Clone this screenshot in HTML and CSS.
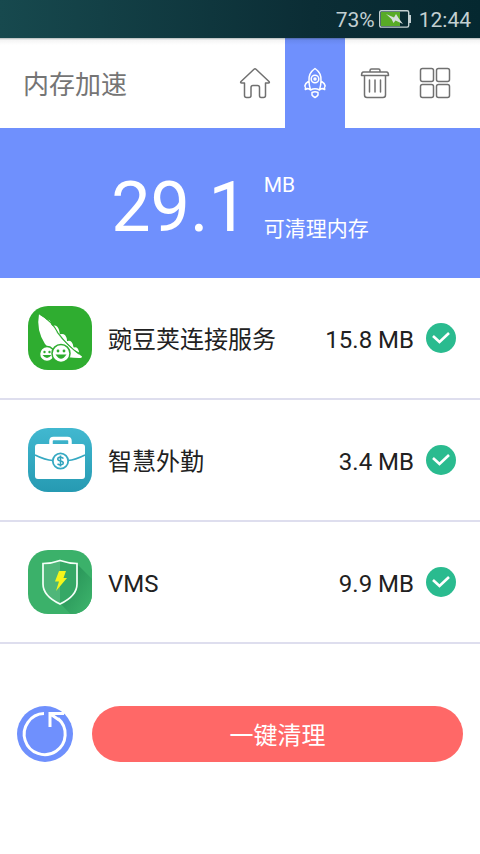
FILE: index.html
```html
<!DOCTYPE html>
<html lang="zh-CN">
<head>
<meta charset="utf-8">
<meta name="viewport" content="width=device-width, initial-scale=1">
<title>内存加速</title>
<link rel="stylesheet" href="styles.css">
</head>
<body>
<div class="status-bar">
  <span>73%</span>
  <svg class="battery" width="32" height="18" viewBox="0 0 32 18" aria-hidden="true">
    <rect x="0.7" y="0.7" width="29" height="16.4" rx="1.5" fill="none" stroke="#c3d0d2" stroke-width="1.4"/>
    <rect x="30" y="5" width="2" height="8" fill="#c3d0d2"/>
    <rect x="2" y="2" width="19" height="14" fill="#58ab27"/>
    <path d="M7 4L15 7.500L17 4L19.500 8L24 14L16.500 10.500L14.500 13L12.500 9Z" fill="#d5dfdc"/>
  </svg>
  <span class="clock">12:44</span>
</div>
<header class="app-bar">
  <h1 class="title">内存加速</h1>
  <nav class="tabs">
    <a class="tab" href="#home" aria-label="主页">
      <svg width="32" height="32" viewBox="0 0 32 32"><path d="M15 2.200Q16 1.300 17 2.200L30 14.500Q31 16 29.300 16H26.500V28.500Q26.500 30.500 24.500 30.500H22Q20.500 30.500 20.500 28.500V20.500Q20.500 18.500 18.500 18.500H14Q12 18.500 12 20.500V28.500Q12 30.500 10 30.500H7.500Q5.500 30.500 5.500 28.500V16H2.700Q1 16 2 14.500Z"/></svg>
    </a>
    <a class="tab tab-active" href="#boost" aria-label="内存加速" aria-current="page">
      <svg width="32" height="32" viewBox="0 0 32 32"><path d="M16 1.500C11.500 4.500 9.500 9 10 14Q6.500 16 5.800 19Q7 20 6.300 22.500Q9.500 20.500 11.500 23Q16 20.500 20.500 23Q22.500 20.500 25.700 22.500Q25 20 26.200 19Q25.500 16 22 14C22.500 9 20.500 4.500 16 1.500ZM10 14Q10 18 11.500 23M22 14Q22 18 20.500 23M13 25.500Q16 24 19 25.500V28Q18 29.500 16 30.500Q14 29.500 13 28Z"/><circle cx="16" cy="12" r="3.800"/><circle cx="16" cy="12" r="1"/></svg>
    </a>
    <a class="tab" href="#clean" aria-label="垃圾清理">
      <svg width="32" height="32" viewBox="0 0 32 32"><path d="M11 5V3.500Q11 2 12.500 2H19.500Q21 2 21 3.500V5M4.500 5H27.500Q29.500 5 29.500 8.500H2.500Q2.500 5 4.500 5ZM5.500 8.500V28Q5.500 30.500 8 30.500H24Q26.500 30.500 26.500 28V8.500M10.500 13V25M16 13V25M21.500 13V25"/></svg>
    </a>
    <a class="tab" href="#apps" aria-label="应用">
      <svg width="32" height="32" viewBox="0 0 32 32"><rect x="1.500" y="1.500" width="13" height="13" rx="2"/><rect x="17.500" y="1.500" width="13" height="13" rx="2"/><rect x="1.500" y="17.500" width="13" height="13" rx="2"/><rect x="17.500" y="17.500" width="13" height="13" rx="2"/></svg>
    </a>
  </nav>
</header>
<main>
  <section class="summary">
    <span class="amount">29.1</span>
    <div class="amount-info"><span>MB</span><span>可清理内存</span></div>
  </section>
  <ul class="app-list">
    <li class="app-row">
      <svg class="app-icon" viewBox="0 0 64 64" aria-hidden="true">
        <rect width="64" height="64" rx="20" fill="#2fad30"/>
        <path d="M18.500 15Q22 13 22.500 19ZM24 21Q30 18 31 28ZM32 29Q38 27 38.500 36ZM39 36Q44 34 45 42ZM45 42.500Q49 40.500 50 45Z" fill="#fff" stroke="#fff" stroke-width="1.500"/>
        <path d="M11 8Q23 15 29 27Q39 40 54 50.500Q54 52 51 52Q29 52 17 38Q8 24 11 8Z" fill="#fff"/>
        <path d="M11.500 8Q24 15 30 27Q39 39 51 48" fill="none" stroke="#2fad30" stroke-width="1.200"/>
        <g fill="#fff" stroke="#2fad30" stroke-width="1.500"><circle cx="19" cy="48" r="7.500"/><circle cx="33" cy="47.500" r="9"/></g>
        <g fill="#2fad30"><circle cx="16.500" cy="46" r="1.200"/><circle cx="21.500" cy="46" r="1.200"/><path d="M14.500 49H23.500Q19 55 14.500 49Z"/><circle cx="30" cy="45" r="1.400"/><circle cx="36" cy="45" r="1.400"/><path d="M27.500 48.500H38.500Q33 57 27.500 48.500Z"/></g>
      </svg>
      <label class="app-name" for="app1">豌豆荚连接服务</label>
      <span class="app-size">15.8 MB</span>
      <input class="check" id="app1" type="checkbox" checked>
    </li>
    <li class="app-row">
      <svg class="app-icon" viewBox="0 0 64 64" aria-hidden="true">
        <defs><linearGradient id="cyan" x1="0" y1="0" x2="0" y2="1"><stop offset="0" stop-color="#41b8d0"/><stop offset="1" stop-color="#269ab2"/></linearGradient></defs>
        <rect width="64" height="64" rx="20" fill="url(#cyan)"/>
        <path d="M23 16V13Q23 10.500 25.500 10.500H39.500Q42 10.500 42 13V16" fill="none" stroke="#fff" stroke-width="3.500"/>
        <rect x="7" y="16" width="50" height="35" rx="3" fill="#fff"/>
        <path d="M7 27Q17 32 25 32.500M57 27Q47 32 40 32.500" fill="none" stroke="#36a9c2" stroke-width="1.600"/>
        <circle cx="32.500" cy="33" r="7.700" fill="#fff" stroke="#36a9c2" stroke-width="1.800"/>
        <path d="M35.500 30.500Q32.500 28 30 30Q29 32.500 32.500 33Q36 33.700 35 36Q32.500 38 29.500 35.800M32.500 27.500V38.500" fill="none" stroke="#2fa3bd" stroke-width="1.600"/>
      </svg>
      <label class="app-name" for="app2">智慧外勤</label>
      <span class="app-size">3.4 MB</span>
      <input class="check" id="app2" type="checkbox" checked>
    </li>
    <li class="app-row">
      <svg class="app-icon" viewBox="0 0 64 64" aria-hidden="true">
        <defs><clipPath id="tile"><rect width="64" height="64" rx="20"/></clipPath><linearGradient id="shade" x1="0" y1="0" x2="1" y2="1"><stop offset="0.300" stop-color="#2b985b"/><stop offset="0.800" stop-color="#3bb16a"/></linearGradient></defs>
        <rect width="64" height="64" rx="20" fill="#3bb16a"/>
        <path d="M49 14L68 33V68H46L33 54Z" fill="url(#shade)" clip-path="url(#tile)"/>
        <path d="M32 10.500Q41 13.500 49 13.500V34Q49 46 32 54Q15 46 15 34V13.500Q24 13.500 32 10.500Z" fill="#35a866"/>
        <path d="M32 10.500V54Q15 46 15 34V13.500Q24 13.500 32 10.500Z" fill="#4fb679"/>
        <path d="M32 10.500Q41 13.500 49 13.500V34Q49 46 32 54Q15 46 15 34V13.500Q24 13.500 32 10.500Z" fill="none" stroke="#f4fff8" stroke-width="1.700"/>
        <path d="M31 21H38L35.500 28H39L28 41L31 31.500H27Z" fill="#f4f51b"/>
      </svg>
      <label class="app-name" for="app3">VMS</label>
      <span class="app-size">9.9 MB</span>
      <input class="check" id="app3" type="checkbox" checked>
    </li>
  </ul>
  <div class="actions">
    <button class="refresh" type="button" aria-label="刷新">
      <svg width="56" height="56" viewBox="0 0 56 56"><path d="M27 7.600A20.500 20.500 0 1 0 41 12.500M33 21V7.500H47M33.500 8L42 14" fill="none" stroke="#fff" stroke-width="3"/></svg>
    </button>
    <button class="clean" type="button">一键清理</button>
  </div>
</main>
</body>
</html>
```

FILE: styles.css
```css
* {
  box-sizing: border-box;
}

body {
  margin: 0;
  background: #fff;
  color: #212121;
  font-family: Roboto, "Noto Sans CJK SC", sans-serif;
  font-size: 24px;
  line-height: 32px;
}

.status-bar {
  display: flex;
  align-items: center;
  justify-content: flex-end;
  height: 38px;
  padding: 2px 9px 0;
  background: linear-gradient(90deg, #17494e, #0b2d35 65%, #052830);
  color: #c3d0d2;
  font-size: 21px;
}

.battery {
  margin: 0 8px 2px 4px;
}

.app-bar {
  display: flex;
  align-items: center;
  justify-content: space-between;
  height: 90px;
  padding: 0 15px 0 23px;
  background: linear-gradient(#b0b8b8, #f4f4f4 2px, #fff 7px);
}

.title {
  margin: 0;
  padding-top: 4px;
  color: #757575;
  font-size: 26px;
  font-weight: 400;
}

.tabs {
  display: flex;
  height: 100%;
}

.tab {
  display: flex;
  align-items: center;
  justify-content: center;
  width: 60px;
}

.tab svg {
  fill: none;
  stroke: #707070;
  stroke-width: 1.5;
  stroke-linejoin: round;
  stroke-linecap: round;
}

.tab-active {
  background: linear-gradient(#5068a8, #6888ee 2px, #6f90fd 7px);
}

.tab-active svg {
  stroke: #fff;
}

.summary {
  display: flex;
  align-items: center;
  justify-content: center;
  gap: 16px;
  height: 150px;
  padding-top: 8px;
  background: #6f90fd;
  color: #fff;
}

.amount {
  font-size: 70px;
  line-height: 80px;
}

.amount-info {
  display: grid;
  gap: 12px;
  font-size: 21px;
}

.app-list {
  margin: 0;
  padding: 0;
  list-style: none;
}

.app-row {
  display: flex;
  align-items: center;
  padding: 28px 24px 28px 28px;
  border-bottom: 2px solid #dedeee;
}

.app-icon {
  width: 64px;
  height: 64px;
  margin-right: 16px;
}

.app-name {
  flex: 1;
  padding-top: 4px;
}

.app-size {
  margin-right: 12px;
  padding-top: 4px;
}

.check {
  appearance: none;
  width: 30px;
  height: 30px;
  margin: 0;
  border-radius: 50%;
  background: #2abb8f url("data:image/svg+xml,%3Csvg xmlns='http://www.w3.org/2000/svg' viewBox='0 0 30 30'%3E%3Cpath d='M7 13L13.500 19L23 10' fill='none' stroke='white' stroke-width='2.600'/%3E%3C/svg%3E");
}

.check:not(:checked) {
  background: #ddd;
}

.actions {
  display: flex;
  gap: 19px;
  padding: 62px 17px;
}

button {
  height: 56px;
  padding: 0;
  border: 0;
  border-radius: 28px;
  color: #fff;
  font: inherit;
}

.refresh {
  width: 56px;
  background: #6f90fd;
}

.refresh svg {
  display: block;
}

.clean {
  flex: 1;
  padding-top: 4px;
  background: #ff6867;
}
```
